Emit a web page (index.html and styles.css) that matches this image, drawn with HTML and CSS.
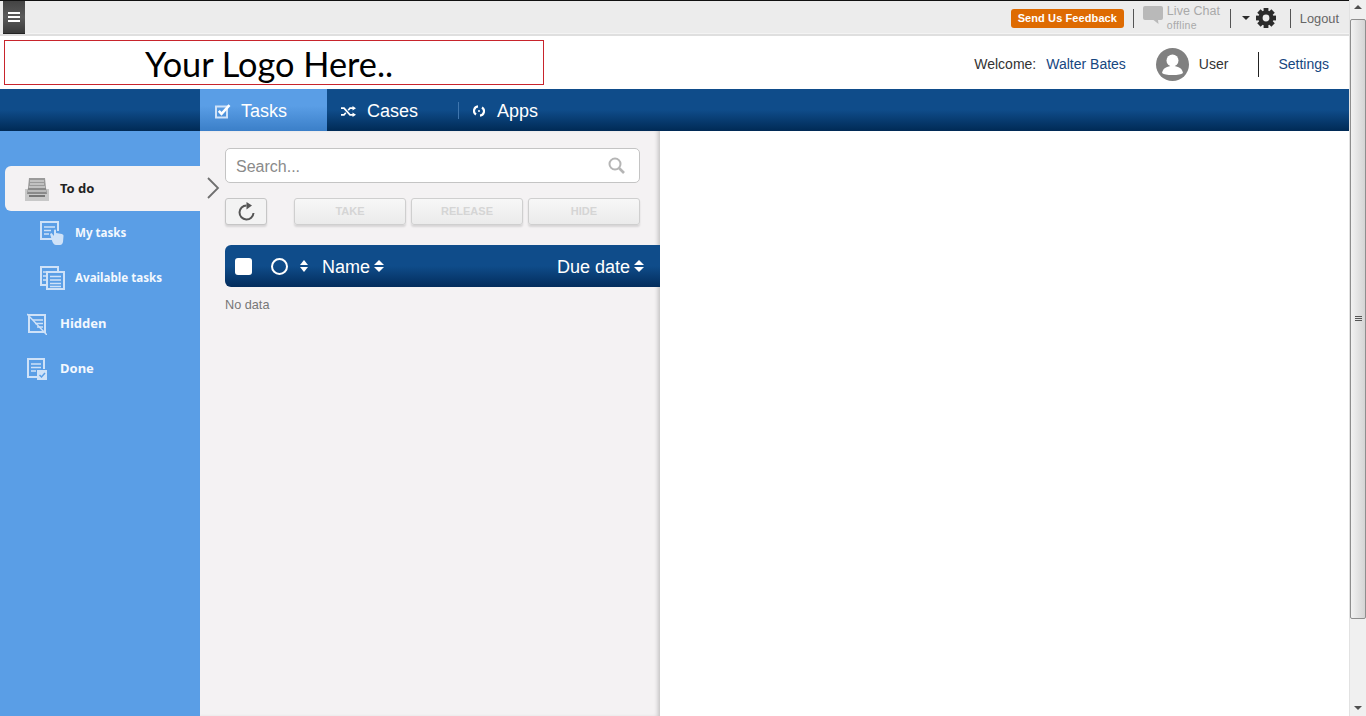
FILE: index.html
```html
<!DOCTYPE html>
<html lang="en">
<head>
<meta charset="utf-8">
<title>Tasks</title>
<link rel="stylesheet" href="styles.css">
</head>
<body>
<div class="page">
  <div class="main">
    <header class="topbar">
      <button class="menu-btn" aria-label="Menu"><span></span><span></span><span></span></button>
      <div class="top-right">
        <a class="feedback">Send Us Feedback</a>
        <i class="sep sep-a"></i>
        <svg class="chat-ico" width="20" height="19" viewBox="0 0 20 19"><path fill="#b9b9b9" d="M2 0h16a2 2 0 0 1 2 2v10a2 2 0 0 1-2 2h-3l.5 4-5-4H2a2 2 0 0 1-2-2V2a2 2 0 0 1 2-2z"/></svg>
        <div class="chat"><div class="chat-a">Live Chat</div><div class="chat-b">offline</div></div>
        <i class="sep sep-b"></i>
        <i class="caret"></i>
        <svg class="gear" width="20" height="20" viewBox="0 0 20 20"><circle cx="10" cy="10" r="5.500" fill="none" stroke="#2b2b2b" stroke-width="4.200"/><g fill="#2b2b2b"><path d="M7.600 0h4.800v4H7.600z"/><path d="M7.600 16h4.800v4H7.600z"/><path d="M0 7.600h4v4.800H0z"/><path d="M16 7.600h4v4.800h-4z"/><path transform="rotate(45 10 10)" d="M7.600 0h4.800v4H7.600z"/><path transform="rotate(135 10 10)" d="M7.600 0h4.800v4H7.600z"/><path transform="rotate(225 10 10)" d="M7.600 0h4.800v4H7.600z"/><path transform="rotate(315 10 10)" d="M7.600 0h4.800v4H7.600z"/></g></svg>
        <i class="sep sep-c"></i>
        <a class="logout">Logout</a>
      </div>
    </header>

    <div class="brand">
      <div class="logo">Your Logo Here..</div>
      <div class="user">
        <span class="welcome">Welcome:</span>
        <a class="link name">Walter Bates</a>
        <svg class="avatar" width="33" height="33" viewBox="0 0 33 33"><circle cx="16.500" cy="16.500" r="16.500" fill="#808080"/><circle cx="16.500" cy="12.500" r="6" fill="#fff"/><path fill="#fff" d="M6 25c1-5 5-7 10.500-7S26 20 27 25c-2 1.500-5 2-10.500 2S8 26.500 6 25z"/></svg>
        <span class="role">User</span>
        <i class="sep-tall"></i>
        <a class="link settings">Settings</a>
      </div>
    </div>

    <nav class="nav">
      <a class="nav-item active">
        <svg width="16" height="15" viewBox="0 0 16 15"><path fill="none" stroke="#cfe2f8" stroke-width="2" d="M1 2.500h11v11H1z"/><path fill="none" stroke="#fff" stroke-width="2.600" d="M3.800 6.800l2.700 3L14.500 1.200"/></svg>
        <span>Tasks</span>
      </a>
      <a class="nav-item cases">
        <svg width="15" height="11" viewBox="0 0 15 11"><path fill="none" stroke="#fff" stroke-width="1.700" d="M0 2.200h3l6 6.600h3M0 8.800h3l1.800-2M7.200 4.200L9 2.200h3"/><path fill="#fff" d="M11.500 0L15 2.200l-3.500 2.200zM11.500 6.600L15 8.800 11.500 11z"/></svg>
        <span>Cases</span>
      </a>
      <a class="nav-item apps">
        <svg width="12" height="12" viewBox="0 0 12 12"><path fill="none" stroke="#fff" stroke-width="2.200" d="M5 1.300A4.500 4.500 0 0 0 3 9.500M7 10.700A4.500 4.500 0 0 0 9 2.500"/><circle cx="6" cy="6" r="1" fill="#fff"/></svg>
        <span>Apps</span>
      </a>
    </nav>

    <div class="body">
      <aside class="side">
        <a class="side-item current">
          <svg class="ico-l" width="24" height="24" viewBox="0 0 24 24"><path fill="#9a9a9a" d="M4 1h16l1 10H3z"/><path fill="#c8c8c8" d="M0 12h24v12H0z"/><path fill="#8a8a8a" d="M3 11h18l1 6H2z"/><path stroke="#e8e8e8" stroke-width="1.200" d="M5 4h14M5 7h14M4 10h16M3 14h18"/><path fill="#777" d="M4 18h16v2H4z"/></svg>
          <span class="side-label">To do</span>
        </a>
        <a class="side-item sub">
          <svg class="ico-s" width="25" height="24" viewBox="0 0 25 24"><path fill="none" stroke="#cfe2f8" stroke-width="2" d="M12 18H1V1h17v9"/><path stroke="#cfe2f8" stroke-width="1.500" d="M4 6h11M4 9.500h7M4 13h5"/><path fill="#cfe2f8" d="M10 13l1.500-1 2.500 3V9.500a1 1 0 0 1 2 0V12l6 1c1 .5 1.500 1 1.500 2l-.5 6c-.5 2-1.500 3-3 3h-4c-1.500 0-2.500-1-3.500-3z"/></svg>
          <span>My tasks</span>
        </a>
        <a class="side-item sub">
          <svg class="ico-s" width="25" height="24" viewBox="0 0 25 24"><path fill="none" stroke="#cfe2f8" stroke-width="2" d="M6 19H1V1h17v5"/><path fill="#5a9ee6" stroke="#cfe2f8" stroke-width="2" d="M7 6h17v17H7z"/><path stroke="#cfe2f8" stroke-width="1.500" d="M10 10.500h11M10 14h11M10 17.500h11M10 20.500h11"/><path stroke="#cfe2f8" stroke-width="1.500" d="M3 6h4M3 10h4M3 14h4"/></svg>
          <span>Available tasks</span>
        </a>
        <a class="side-item top">
          <svg class="ico-m" width="20" height="22" viewBox="0 0 20 22"><path fill="none" stroke="#cfe2f8" stroke-width="2" d="M2 2h16v17H2z"/><path stroke="#cfe2f8" stroke-width="1.500" d="M6 7h10M8 10.500h8M10 14h6"/><path stroke="#cfe2f8" stroke-width="1.500" d="M0 1l20 21"/></svg>
          <span class="side-label">Hidden</span>
        </a>
        <a class="side-item top">
          <svg class="ico-m" width="20" height="22" viewBox="0 0 20 22"><path fill="none" stroke="#cfe2f8" stroke-width="2" d="M11 19H1V1h16v10"/><path stroke="#cfe2f8" stroke-width="1.500" d="M4 6h10M4 9.500h10M4 13h5"/><path fill="#cfe2f8" d="M10 12h10v10H10z"/><path fill="none" stroke="#5a9ee6" stroke-width="1.500" d="M12.500 17l2 2 3.500-4"/></svg>
          <span class="side-label">Done</span>
        </a>
      </aside>

      <section class="list">
        <svg class="pointer" width="13" height="22" viewBox="0 0 13 22"><path fill="none" stroke="#6f6f6f" stroke-width="1.800" d="M1 1l10 10L1 21"/></svg>
        <div class="search">
          <span class="placeholder">Search...</span>
          <svg width="17" height="17" viewBox="0 0 17 17"><circle cx="7" cy="7" r="5.500" fill="none" stroke="#b5b5b5" stroke-width="2"/><path stroke="#b5b5b5" stroke-width="2.600" d="M11 11l5 5"/></svg>
        </div>
        <div class="actions">
          <button class="refresh" aria-label="Refresh"><svg width="18" height="19" viewBox="0 0 18 19"><path fill="none" stroke="#555" stroke-width="2" d="M9.500 3.500A7 7 0 1 0 16.500 11"/><path fill="#555" d="M9.500 0l5.500 3.500L9.500 7.500z"/></svg></button>
          <button class="act">TAKE</button>
          <button class="act">RELEASE</button>
          <button class="act">HIDE</button>
        </div>
        <div class="thead">
          <i class="check"></i>
          <i class="ring"></i>
          <i class="sort sort-a"></i>
          <span class="th-name">Name</span>
          <i class="sort"></i>
          <span class="th-due">Due date</span>
          <i class="sort"></i>
        </div>
        <p class="empty">No data</p>
      </section>

      <section class="detail"></section>
    </div>
  </div>

  <div class="scrollbar">
    <div class="arrow up"></div>
    <div class="thumb"><span></span></div>
    <div class="track"></div>
    <div class="arrow down"></div>
  </div>
</div>
</body>
</html>
```

FILE: styles.css
```css
* { box-sizing: border-box; }
html, body { margin: 0; height: 100%; overflow: hidden; }
body { font-family: "Liberation Sans", Arial, sans-serif; background: #fff; color: #333; }
a { text-decoration: none; }
button { font-family: inherit; padding: 0; }
.page { display: flex; height: 716px; }
.main { width: 1349px; height: 716px; display: flex; flex-direction: column; flex: none; }

.topbar { height: 36px; flex: none; display: flex; justify-content: space-between; background: #ececec; border-top: 1px solid #111; border-bottom: 2px solid #dfdfdf; box-shadow: inset 0 -1px 0 #f4f4f4; }
.menu-btn { width: 22px; height: 33px; margin-left: 3px; display: flex; flex-direction: column; justify-content: center; align-items: center; gap: 2px; border: 0; border-bottom: 1px solid #222; background: linear-gradient(#444, #5a5a5a 50%, #3a3a3a); }
.menu-btn span { display: block; width: 12px; height: 2px; background: #fff; }
.top-right { display: flex; align-items: center; padding-right: 10px; }
.feedback { width: 113px; height: 19px; margin-top: 1px; border-radius: 3px; background: #de6b02; color: #fff; font-size: 11px; font-weight: bold; line-height: 19px; text-align: center; letter-spacing: .1px; }
.sep { display: block; width: 1px; height: 19px; background: #555; }
.sep-a { margin: 1px 9px 0 9px; }
.chat-ico { margin: -5px 4px 0 0; }
.chat { width: 60px; color: #a9a9a9; margin-top: -1px; }
.chat-a { font-size: 12.500px; line-height: 15px; letter-spacing: .05px; }
.chat-b { font-size: 10.500px; line-height: 12px; letter-spacing: .3px; }
.sep-b { margin: 1px 11px 0 3px; }
.caret { width: 0; height: 0; border: 4px solid transparent; border-top: 4px solid #2b2b2b; border-bottom: 0; margin-right: 6px; }
.gear { margin-right: 14px; }
.sep-c { margin: 1px 9px 0 0; }
.logout { font-size: 12.800px; color: #666; margin-top: 1px; }

.brand { height: 53px; flex: none; display: flex; justify-content: space-between; align-items: center; padding: 0 20px 0 4px; }
.logo { width: 540px; height: 45px; border: 1px solid #c8242c; color: #000; font-family: Lato, sans-serif; font-size: 34.300px; line-height: 46px; padding-left: 140px; }
.user { display: flex; align-items: center; font-size: 14px; padding-top: 2px; }
.welcome { color: #333; margin-right: 10px; }
.link { color: #16467f; }
.name { margin-right: 30px; }
.avatar { margin: 2px 10px 0 0; }
.role { color: #333; margin-right: 30px; }
.sep-tall { width: 1px; height: 25px; background: #222; margin: 2px 19px 0 0; }

.nav { height: 42px; flex: none; display: flex; padding-left: 200px; background: linear-gradient(#0f4c8a, #0f4c8a 50%, #002a55); color: #fff; font-size: 18px; }
.nav-item { display: flex; align-items: center; color: #fff; height: 42px; padding-top: 2px; }
.nav-item.active { width: 127px; padding-left: 15px; gap: 10px; background: linear-gradient(#5a9ee6, #5a9ee6 40%, #3b7fc8); }
.nav-item.cases { width: 131px; padding-left: 14px; gap: 11px; }
.nav-item.apps { padding-left: 15px; gap: 12px; position: relative; }
.nav-item.apps::before { content: ""; position: absolute; left: 0; top: 13px; height: 17px; width: 1px; background: #3f76ae; }

.body { flex: 1; display: flex; min-height: 0; }
.side { width: 200px; flex: none; background: #5a9ee6; padding: 35px 0 0 5px; }
.side-item { display: flex; align-items: center; height: 45px; color: #f3f8fe; font-family: "Noto Sans", sans-serif; font-weight: 700; font-size: 13px; }
.side-label { padding-bottom: 2px; }
.side-item.current { background: #f4f2f3; color: #222; border-radius: 6px 0 0 6px; padding-left: 20px; gap: 11px; }
.side-item.sub { padding: 0 0 2px 35px; font-size: 11.600px; gap: 10px; }
.side-item.top { padding-left: 22px; gap: 13px; }

.list { width: 460px; flex: none; background: #f4f2f3; padding: 17px 20px 0 25px; position: relative; box-shadow: inset -4px 0 4px -2px rgba(0,0,0,.2); }
.pointer { position: absolute; left: 7px; top: 46px; }
.search { height: 35px; border: 1px solid #c4c4c4; border-radius: 5px; background: #fff; display: flex; justify-content: space-between; align-items: center; padding: 0 14px 0 10px; font-size: 16px; color: #8a8a8a; }
.placeholder { padding-top: 2px; }
.actions { display: flex; margin-top: 15px; gap: 5px; }
.refresh { width: 42px; height: 27px; margin-right: 22px; border: 1px solid #c6c6c6; border-radius: 3px; background: #f3f3f3; box-shadow: 0 2px 2px rgba(0,0,0,.12); display: flex; align-items: center; justify-content: center; }
.act { width: 112px; height: 27px; padding-bottom: 2px; border: 1px solid #cfcfcf; border-radius: 3px; background: linear-gradient(#f7f7f7, #ebebeb); box-shadow: 0 2px 2px rgba(0,0,0,.12); color: #d5d5d5; font-size: 11px; font-weight: bold; }
.thead { margin-top: 20px; margin-right: -20px; height: 42px; display: flex; align-items: center; border-radius: 6px 0 0 6px; background: linear-gradient(#0f4c8a, #0f4c8a 50%, #032d5c); color: #fff; font-size: 18px; }
.check { width: 17px; height: 17px; margin-left: 10px; border-radius: 3px; background: #fff; }
.ring { width: 17px; height: 17px; margin-left: 19px; border: 2.500px solid #fff; border-radius: 50%; }
.sort { display: flex; flex-direction: column; gap: 2px; margin-left: 4px; width: 10px; }
.sort::before, .sort::after { content: ""; display: block; width: 0; height: 0; border-left: 5px solid transparent; border-right: 5px solid transparent; }
.sort::before { border-bottom: 5px solid #fff; }
.sort::after { border-top: 5px solid #fff; }
.sort-a { margin-left: 12px; width: 8px; }
.sort-a::before, .sort-a::after { border-left-width: 4px; border-right-width: 4px; }
.th-name { margin-left: 14px; padding-top: 2px; }
.th-due { margin-left: auto; padding-top: 2px; }
.thead .sort:last-child { margin-right: 16px; }
.empty { margin: 11px 0 0; font-size: 12.700px; color: #777; }
.detail { flex: 1; background: #fff; }

.scrollbar { width: 17px; flex: none; height: 716px; display: flex; flex-direction: column; background: #f0f0f0; border-left: 1px solid #e2e2e2; }
.arrow { height: 18px; flex: none; position: relative; }
.arrow.up { height: 19px; }
.arrow::after { content: ""; position: absolute; left: 4px; width: 0; height: 0; border: 4px solid transparent; }
.arrow.up::after { top: 5px; border-bottom: 4px solid #505050; border-top: 0; }
.arrow.down::after { top: 8px; border-top: 4px solid #505050; border-bottom: 0; }
.thumb { height: 600px; flex: none; border: 1px solid #8e8e8e; border-radius: 2px; background: linear-gradient(to right, #f2f2f2, #d4d4d4); display: flex; align-items: center; justify-content: center; }
.thumb span { width: 7px; height: 6px; background: repeating-linear-gradient(#555 0 1px, transparent 1px 2px); }
.track { flex: 1; }
```
